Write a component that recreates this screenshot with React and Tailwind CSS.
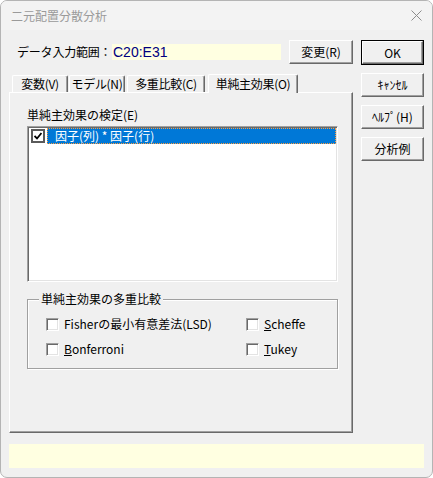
import React from "react";

const FONT = "font-['Noto_Sans_CJK_JP','Noto_Sans',sans-serif]";

// classic raised button
function Button({ children, isDefault }) {
  const face = (
    <div className="w-full h-full flex items-center justify-center border border-t-white border-l-white border-r-[#696969] border-b-[#696969] shadow-[inset_-1px_-1px_0_#a0a0a0] text-[12px] leading-[14px] text-black">
      {children}
    </div>
  );
  if (isDefault) {
    return <div className="w-[63px] h-[25px] border border-black">{face}</div>;
  }
  return <div className="w-[63px] h-[24px]">{face}</div>;
}

function Tab({ label, width, selected }) {
  if (selected) {
    return (
      <div
        className="relative z-10 -mb-[1px] h-[19px] bg-[#f0f0f0] border-t border-l border-r border-t-white border-l-white border-r-[#696969] shadow-[inset_-1px_0_0_#a0a0a0] rounded-t-[2px] flex items-center justify-center whitespace-nowrap tracking-[-0.3px] text-[12px] leading-[14px] pb-[1px]"
        style={{ width }}
      >
        {label}
      </div>
    );
  }
  return (
    <div
      className="h-[17px] border-t border-l border-r border-t-white border-l-white border-r-[#696969] shadow-[inset_-1px_0_0_#a0a0a0] rounded-t-[2px] flex items-center justify-center whitespace-nowrap tracking-[-0.3px] text-[12px] leading-[14px]"
      style={{ width }}
    >
      {label}
    </div>
  );
}

function CheckBox({ children }) {
  return (
    <div className="flex items-center h-[14px]">
      <div className="w-[13px] h-[13px] bg-white border border-t-[#a0a0a0] border-l-[#a0a0a0] border-r-white border-b-white shadow-[inset_1px_1px_0_#696969,inset_-1px_-1px_0_#e3e3e3]" />
      <span className="ml-[5px] text-[12px] leading-[14px] whitespace-nowrap">{children}</span>
    </div>
  );
}

export default function App() {
  return (
    <div className={`w-[433px] h-[478px] bg-white ${FONT} text-black`}>
      <div className="w-[433px] h-[478px] border border-[#b4b4b4] rounded-[7px] bg-[#f0f0f0] overflow-hidden flex flex-col">
        {/* title bar */}
        <div className="h-[29px] flex items-center justify-between pl-[10px] pr-[10px] bg-[#f3f3f3]">
          <span className="text-[12px] leading-[14px] text-[#9a9a9a]">二元配置分散分析</span>
          <svg width="11" height="11" viewBox="0 0 11 11">
            <path d="M0.5 0.5 L10.5 10.5 M10.5 0.5 L0.5 10.5" stroke="#8c8c8c" strokeWidth="1" />
          </svg>
        </div>

        <div className="flex pt-[10px] px-[8px]">
          {/* left column */}
          <div className="w-[344px] flex flex-col">
            <div className="flex items-center h-[24px]">
              <div className="w-[103px] pl-[8px] text-[12px] leading-[14px] whitespace-nowrap tracking-[-0.2px]">データ入力範囲：</div>
              <div className="w-[169px] h-[16px] bg-[#ffffe1] flex items-center pl-[1px] text-[14px] leading-[16px] text-[#00007f] font-['Liberation_Sans',sans-serif]">
                C20:E31
              </div>
              <div className="ml-[8px] w-[64px] h-[24px] flex items-center justify-center border border-t-white border-l-white border-r-[#696969] border-b-[#696969] shadow-[inset_-1px_-1px_0_#a0a0a0] text-[12px] leading-[14px]">
                変更(R)
              </div>
            </div>

            {/* tabs */}
            <div className="mt-[10px] h-[18px] flex items-end pl-[3px]">
              <Tab label="変数(V)" width={56} />
              <div className="ml-[1px]">
                <Tab label="モデル(N)" width={56} />
              </div>
              <div className="ml-[2px]">
                <Tab label="多重比較(C)" width={78} />
              </div>
              <div className="ml-[3px]">
                <Tab label="単純主効果(O)" width={90} selected />
              </div>
            </div>

            {/* tab panel */}
            <div className="w-[344px] h-[341px] border border-t-white border-l-white border-r-[#696969] border-b-[#696969] shadow-[inset_-1px_-1px_0_#a0a0a0] pt-[15px] pl-[17px]">
              <div className="text-[12px] leading-[14px]">単純主効果の検定(E)</div>
              <div className="mt-[4px] w-[311px] h-[156px] bg-white border border-t-[#a0a0a0] border-l-[#a0a0a0] border-r-white border-b-white shadow-[inset_1px_1px_0_#696969,inset_-1px_-1px_0_#e3e3e3] p-[1px]">
                <div className="flex items-center h-[16px]">
                  <div className="ml-[2px] w-[14px] h-[14px] border-2 border-[#5a5a5a] bg-white flex items-center justify-center">
                    <svg width="8" height="8" viewBox="0 0 8 8">
                      <path d="M0.5 4 L3 6.5 L7.5 1" stroke="black" strokeWidth="1.8" fill="none" />
                    </svg>
                  </div>
                  <div className="ml-[2px] flex-1 h-[16px] bg-[#0078d7] border border-dotted border-[#ff9d3c] flex items-center pl-[7px] text-white text-[12px] leading-[14px]">
                    因子(列) * 因子(行)
                  </div>
                </div>
              </div>

              {/* group box */}
              <div className="relative mt-[17px] w-[311px] h-[70px] border border-[#a0a0a0] shadow-[inset_1px_1px_0_white,1px_1px_0_white] pt-[17px] pl-[18px]">
                <div className="absolute -top-[8px] left-[11px] px-[2px] bg-[#f0f0f0] text-[12px] leading-[14px]">
                  単純主効果の多重比較
                </div>
                <div className="flex">
                  <div className="w-[200px]">
                    <CheckBox>Fisherの最小有意差法(LSD)</CheckBox>
                  </div>
                  <CheckBox>
                    <span className="underline">S</span>cheffe
                  </CheckBox>
                </div>
                <div className="flex mt-[11px]">
                  <div className="w-[200px]">
                    <CheckBox>
                      <span className="underline">B</span>onferroni
                    </CheckBox>
                  </div>
                  <CheckBox>
                    <span className="underline">T</span>ukey
                  </CheckBox>
                </div>
              </div>
            </div>
          </div>

          {/* right column */}
          <div className="ml-[8px] flex flex-col gap-[8px]">
            <Button isDefault>OK</Button>
            <Button>ｷｬﾝｾﾙ</Button>
            <Button>ﾍﾙﾌﾟ(H)</Button>
            <Button>分析例</Button>
          </div>
        </div>

        {/* status bar */}
        <div className="mt-[11px] mx-[8px] h-[24px] bg-[#ffffe1]" />
      </div>
    </div>
  );
}
